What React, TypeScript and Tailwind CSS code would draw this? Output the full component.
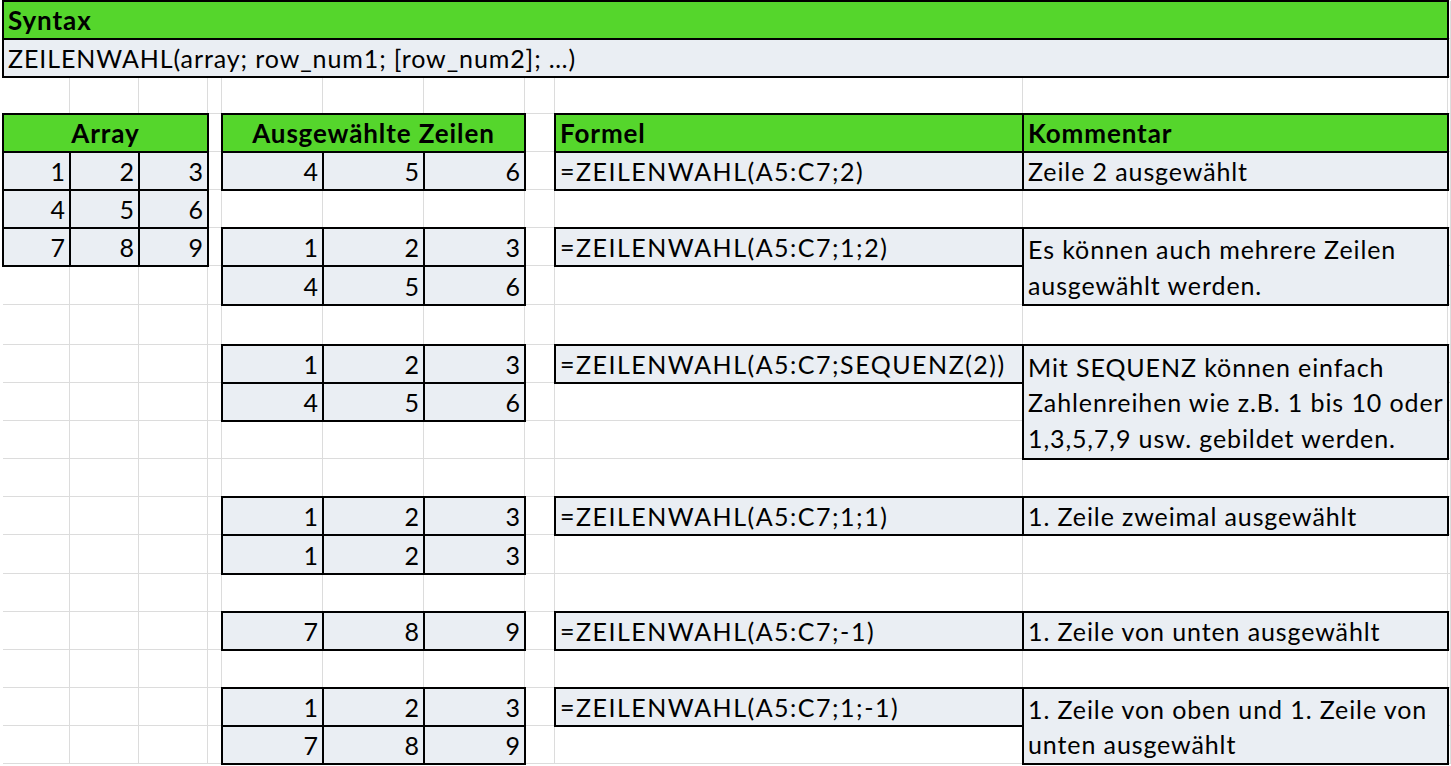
type Cell = {
  pos: string;
  text: string;
  kind: "head" | "fill" | "formula";
  align: "left" | "center" | "right";
};

const GRID_COLS =
  "grid-cols-[67px_69px_69px_14px_101px_101px_101px_30px_468px_425px_1fr]";
const GRID_ROWS =
  "grid-rows-[38px_38px_37px_38px_38px_38px_38px_39px_40px_38px_38px_38px_38px_38px_39px_38px_38px_38px_38px_38px]";

const cells: Cell[] = [
  { pos: "row-start-1 col-start-1 col-span-10", text: "Syntax", kind: "head", align: "left" },
  {
    pos: "row-start-2 col-start-1 col-span-10",
    text: "ZEILENWAHL(array; row_num1; [row_num2]; …)",
    kind: "fill",
    align: "left",
  },
  { pos: "row-start-4 col-start-1 col-span-3", text: "Array", kind: "head", align: "center" },
  { pos: "row-start-4 col-start-5 col-span-3", text: "Ausgewählte Zeilen", kind: "head", align: "center" },
  { pos: "row-start-4 col-start-9", text: "Formel", kind: "head", align: "left" },
  { pos: "row-start-4 col-start-10", text: "Kommentar", kind: "head", align: "left" },

  // array
  { pos: "row-start-5 col-start-1", text: "1", kind: "fill", align: "right" },
  { pos: "row-start-5 col-start-2", text: "2", kind: "fill", align: "right" },
  { pos: "row-start-5 col-start-3", text: "3", kind: "fill", align: "right" },
  { pos: "row-start-6 col-start-1", text: "4", kind: "fill", align: "right" },
  { pos: "row-start-6 col-start-2", text: "5", kind: "fill", align: "right" },
  { pos: "row-start-6 col-start-3", text: "6", kind: "fill", align: "right" },
  { pos: "row-start-7 col-start-1", text: "7", kind: "fill", align: "right" },
  { pos: "row-start-7 col-start-2", text: "8", kind: "fill", align: "right" },
  { pos: "row-start-7 col-start-3", text: "9", kind: "fill", align: "right" },

  // example 1
  { pos: "row-start-5 col-start-5", text: "4", kind: "fill", align: "right" },
  { pos: "row-start-5 col-start-6", text: "5", kind: "fill", align: "right" },
  { pos: "row-start-5 col-start-7", text: "6", kind: "fill", align: "right" },
  { pos: "row-start-5 col-start-9", text: "=ZEILENWAHL(A5:C7;2)", kind: "formula", align: "left" },
  { pos: "row-start-5 col-start-10", text: "Zeile 2 ausgewählt", kind: "fill", align: "left" },

  // example 2
  { pos: "row-start-7 col-start-5", text: "1", kind: "fill", align: "right" },
  { pos: "row-start-7 col-start-6", text: "2", kind: "fill", align: "right" },
  { pos: "row-start-7 col-start-7", text: "3", kind: "fill", align: "right" },
  { pos: "row-start-8 col-start-5", text: "4", kind: "fill", align: "right" },
  { pos: "row-start-8 col-start-6", text: "5", kind: "fill", align: "right" },
  { pos: "row-start-8 col-start-7", text: "6", kind: "fill", align: "right" },
  { pos: "row-start-7 col-start-9", text: "=ZEILENWAHL(A5:C7;1;2)", kind: "formula", align: "left" },
  {
    pos: "row-start-7 row-span-2 col-start-10",
    text: "Es können auch mehrere Zeilen ausgewählt werden.",
    kind: "fill",
    align: "left",
  },

  // example 3
  { pos: "row-start-10 col-start-5", text: "1", kind: "fill", align: "right" },
  { pos: "row-start-10 col-start-6", text: "2", kind: "fill", align: "right" },
  { pos: "row-start-10 col-start-7", text: "3", kind: "fill", align: "right" },
  { pos: "row-start-11 col-start-5", text: "4", kind: "fill", align: "right" },
  { pos: "row-start-11 col-start-6", text: "5", kind: "fill", align: "right" },
  { pos: "row-start-11 col-start-7", text: "6", kind: "fill", align: "right" },
  { pos: "row-start-10 col-start-9", text: "=ZEILENWAHL(A5:C7;SEQUENZ(2))", kind: "formula", align: "left" },
  {
    pos: "row-start-10 row-span-3 col-start-10",
    text: "Mit SEQUENZ können einfach Zahlenreihen wie z.B. 1 bis 10 oder 1,3,5,7,9 usw. gebildet werden.",
    kind: "fill",
    align: "left",
  },

  // example 4
  { pos: "row-start-14 col-start-5", text: "1", kind: "fill", align: "right" },
  { pos: "row-start-14 col-start-6", text: "2", kind: "fill", align: "right" },
  { pos: "row-start-14 col-start-7", text: "3", kind: "fill", align: "right" },
  { pos: "row-start-15 col-start-5", text: "1", kind: "fill", align: "right" },
  { pos: "row-start-15 col-start-6", text: "2", kind: "fill", align: "right" },
  { pos: "row-start-15 col-start-7", text: "3", kind: "fill", align: "right" },
  { pos: "row-start-14 col-start-9", text: "=ZEILENWAHL(A5:C7;1;1)", kind: "formula", align: "left" },
  { pos: "row-start-14 col-start-10", text: "1. Zeile zweimal ausgewählt", kind: "fill", align: "left" },

  // example 5
  { pos: "row-start-17 col-start-5", text: "7", kind: "fill", align: "right" },
  { pos: "row-start-17 col-start-6", text: "8", kind: "fill", align: "right" },
  { pos: "row-start-17 col-start-7", text: "9", kind: "fill", align: "right" },
  { pos: "row-start-17 col-start-9", text: "=ZEILENWAHL(A5:C7;-1)", kind: "formula", align: "left" },
  { pos: "row-start-17 col-start-10", text: "1. Zeile von unten ausgewählt", kind: "fill", align: "left" },

  // example 6
  { pos: "row-start-19 col-start-5", text: "1", kind: "fill", align: "right" },
  { pos: "row-start-19 col-start-6", text: "2", kind: "fill", align: "right" },
  { pos: "row-start-19 col-start-7", text: "3", kind: "fill", align: "right" },
  { pos: "row-start-20 col-start-5", text: "7", kind: "fill", align: "right" },
  { pos: "row-start-20 col-start-6", text: "8", kind: "fill", align: "right" },
  { pos: "row-start-20 col-start-7", text: "9", kind: "fill", align: "right" },
  { pos: "row-start-19 col-start-9", text: "=ZEILENWAHL(A5:C7;1;-1)", kind: "formula", align: "left" },
  {
    pos: "row-start-19 row-span-2 col-start-10",
    text: "1. Zeile von oben und 1. Zeile von unten ausgewählt",
    kind: "fill",
    align: "left",
  },
];

const alignClass = {
  left: "justify-start text-left pl-[4px]",
  center: "justify-center text-center",
  right: "justify-end text-right pr-[3px]",
};

const kindClass = {
  head: "bg-[#55d62c] font-bold text-[26px] tracking-[0.9px]",
  fill: "bg-[#eaeef3] text-[25px] tracking-[0.9px]",
  formula: "bg-[#eaeef3] text-[25px] tracking-[1.5px]",
};

export default function App() {
  return (
    <div
      className="w-[1451px] h-[766px] overflow-hidden bg-white text-black leading-[35.5px]"
      style={{ fontFamily: "Lato, 'Open Sans', sans-serif" }}
    >
      <div className="grid pt-[1px] pl-[3px]">
        {/* sheet gridlines */}
        <div className={`col-start-1 row-start-1 grid ${GRID_COLS} ${GRID_ROWS}`}>
          {Array.from({ length: 20 * 11 }).map((_, i) => (
            <div key={i} className="border-r border-b border-[#dcdcdc]" />
          ))}
        </div>

        {/* bordered cells */}
        <div className={`col-start-1 row-start-1 grid ${GRID_COLS} ${GRID_ROWS}`}>
          {cells.map((c, i) => (
            <div
              key={i}
              className={`${c.pos} -m-px flex items-center pt-[2px] border-2 border-black overflow-hidden ${kindClass[c.kind]} ${alignClass[c.align]}`}
            >
              <span>{c.text}</span>
            </div>
          ))}
        </div>
      </div>
    </div>
  );
}
